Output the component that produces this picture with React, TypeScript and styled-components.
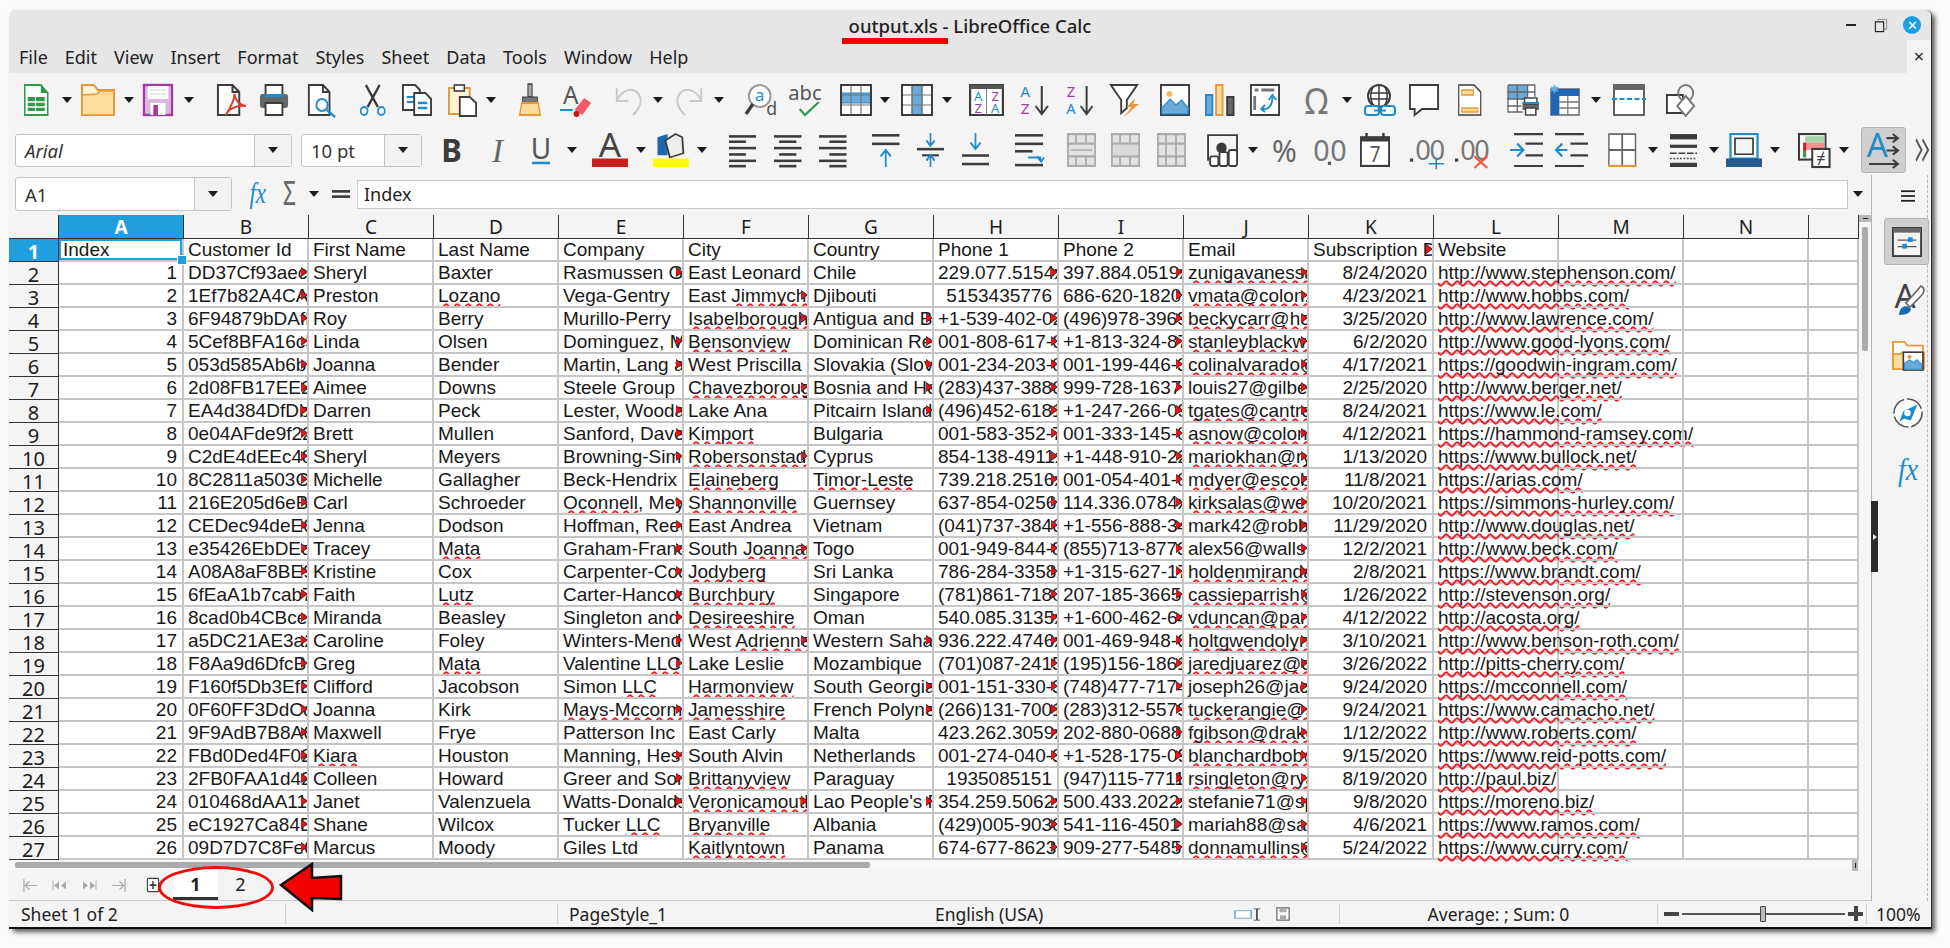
import React, { ReactNode } from 'react';
import styled, { createGlobalStyle } from 'styled-components';

const UI_FONT = '"Noto Sans", "Liberation Sans", sans-serif';
const CELL_FONT = '"Liberation Sans", Arial, sans-serif';
const ACCENT = '#1f9fdf';
const DARK = '#3c3c3c';
const BLUE = '#1e8bcd';
const ORANGE = '#e8963a';
const PURPLE = '#a33aa3';
const GREEN = '#2e9a4b';

const GlobalStyle = createGlobalStyle`
  html, body { margin: 0; padding: 0; background: #fbfbfb; }
  body { width: 1950px; height: 948px; overflow: hidden; font-family: ${UI_FONT}; }
`;

const Page = styled.div`
  padding: 10px 0 0 9px;
`;

const Window = styled.div`
  position: relative;
  width: 1922px;
  height: 919px;
  box-sizing: border-box;
  display: flex;
  flex-direction: column;
  background: #f4f4f4;
  border-radius: 6px 6px 0 0;
  border-bottom: 2px solid #111;
  box-shadow: 4px 3px 5px rgba(0, 0, 0, 0.65), 1px 0 0 #777;
`;

const TitleBar = styled.div`
  height: 30px;
  flex: none;
  display: flex;
  align-items: center;
  justify-content: center;
  position: relative;
  background: #e6e6e6;
  border-radius: 6px 6px 0 0;
  font-size: 18.5px;
  font-weight: 500;
  color: #222;
`;

const WinControls = styled.div`
  position: absolute;
  right: 10px;
  top: 6px;
  display: flex;
  align-items: center;
`;

const CloseDot = styled.div`
  width: 18px;
  height: 18px;
  border-radius: 50%;
  background: ${ACCENT};
  color: #fff;
  font-size: 13px;
  line-height: 18px;
  text-align: center;
  margin-left: 16px;
`;

const MenuBar = styled.div`
  height: 33px;
  flex: none;
  display: flex;
  align-items: center;
  justify-content: space-between;
  background: #e6e6e6;
  padding-left: 10px;
`;

const MenuList = styled.div`
  display: flex;
  gap: 17px;
  font-size: 18px;
  color: #222;
`;

const MenuClose = styled.div`
  width: 24px;
  height: 33px;
  background: #f4f4f4;
  text-align: center;
  font-size: 18px;
  line-height: 33px;
  color: #222;
`;

const ToolRowBox = styled.div<{ $h: number }>`
  height: ${(p) => p.$h}px;
  flex: none;
  display: flex;
  align-items: center;
`;

const Slot = styled.div<{ $w: number; $ml: number }>`
  width: ${(p) => p.$w}px;
  margin-left: ${(p) => p.$ml}px;
  flex: none;
  display: flex;
  justify-content: center;
`;

const Caret = styled.div`
  width: 0;
  height: 0;
  border-left: 5px solid transparent;
  border-right: 5px solid transparent;
  border-top: 6px solid #1c1c1c;
`;

const Combo = styled.div<{ $italic?: boolean; $split: number }>`
  flex: 1;
  height: 33px;
  box-sizing: border-box;
  display: grid;
  grid-template-columns: 1fr ${(p) => p.$split}px;
  align-items: center;
  background: #fff;
  border: 1px solid #c4c4c4;
  border-radius: 3px;
  font-size: 18.5px;
  color: #333;
  font-style: ${(p) => (p.$italic ? 'italic' : 'normal')};
`;

const ComboText = styled.span`
  padding-left: 9px;
`;

const ComboArrow = styled.div`
  height: 100%;
  display: flex;
  align-items: center;
  justify-content: center;
  background: #f2f2f2;
  border-left: 1px solid #c4c4c4;
`;

const ToggleBox = styled.div`
  width: 45px;
  height: 46px;
  box-sizing: border-box;
  display: flex;
  align-items: center;
  justify-content: center;
  background: #cfcfcf;
  border: 1px solid #b4b4b4;
  border-radius: 3px;
`;

const Work = styled.div`
  flex: 1;
  min-height: 0;
  display: flex;
`;

const MainColumn = styled.div`
  width: 1862px;
  flex: none;
  display: flex;
  flex-direction: column;
`;

const FormulaBar = styled.div`
  height: 42px;
  flex: none;
  display: flex;
  align-items: center;
`;

const NameBox = styled(Combo)`
  width: 217px;
  flex: none;
  margin-left: 6px;
  height: 34px;
`;

const FormulaInput = styled.div`
  width: 492px;
  flex: 1;
  height: 29px;
  box-sizing: border-box;
  margin-left: 7px;
  padding-left: 6px;
  background: #fff;
  border: 1px solid #c8c8c8;
  font-size: 18px;
  line-height: 26px;
  color: #222;
`;

const GridArea = styled.div`
  display: flex;
  flex: none;
`;

const Sheet = styled.div`
  width: 1850px;
  flex: none;
  display: grid;
  grid-template-columns: 50px repeat(14, 125px) 1fr;
  grid-template-rows: 24px repeat(27, 23px);
  background: #fff;
`;

const ColHead = styled.div<{ $active?: boolean }>`
  box-sizing: border-box;
  display: flex;
  align-items: center;
  justify-content: center;
  font-size: 19px;
  color: ${(p) => (p.$active ? '#fff' : '#1c1c1c')};
  font-weight: ${(p) => (p.$active ? 700 : 400)};
  background: ${(p) => (p.$active ? ACCENT : '#f4f4f4')};
  border-right: 1px solid #333;
  border-bottom: 1px solid #333;
`;

const Corner = styled.div`
  background: #f4f4f4;
  border-bottom: 1px solid #333;
  border-right: 1px solid #333;
  box-sizing: border-box;
`;

const RowHead = styled(ColHead)`
  font-size: 20px;
  padding-top: 3px;
`;

const Cell = styled.div<{ $right?: boolean; $clip?: boolean; $spill?: boolean; $selected?: boolean }>`
  position: relative;
  box-sizing: border-box;
  padding: 0 ${(p) => (p.$right ? 5 : 4)}px 0 4px;
  border-right: 2px solid #c6c6c6;
  border-bottom: 2px solid #c6c6c6;
  font-family: ${CELL_FONT};
  font-size: 19px;
  line-height: 21px;
  color: #181818;
  white-space: nowrap;
  text-align: ${(p) => (p.$right ? 'right' : 'left')};
  overflow: ${(p) => (p.$spill ? 'visible' : 'hidden')};
  ${(p) =>
    p.$selected &&
    `overflow: visible;
     z-index: 2;
     box-shadow: inset 0 0 0 2px ${ACCENT};`}
  ${(p) =>
    p.$clip &&
    `&::before {
       content: '';
       position: absolute;
       right: -1px;
       top: 5px;
       border-left: 7px solid #222;
       border-top: 5px solid transparent;
       border-bottom: 5px solid transparent;
     }
     &::after {
       content: '';
       position: absolute;
       right: 0;
       top: 6px;
       border-left: 6px solid #e8141c;
       border-top: 4px solid transparent;
       border-bottom: 4px solid transparent;
     }`}
`;

const FillHandle = styled.span`
  position: absolute;
  right: -5px;
  bottom: -5px;
  width: 8px;
  height: 8px;
  background: ${ACCENT};
  border: 1px solid #fff;
`;

const Wave = styled.span`
  text-decoration: underline wavy #e8202a 1.5px;
  text-underline-offset: 1px;
  text-decoration-skip-ink: none;
`;

const VScroll = styled.div`
  width: 12px;
  flex: none;
  display: flex;
  flex-direction: column;
  align-items: center;
  background: #f6f6f6;
`;

const VButton = styled.div`
  width: 12px;
  height: 7px;
  background: #b8b8b8;
  display: flex;
  align-items: center;
  justify-content: center;
  &::after {
    content: '';
    width: 5px;
    height: 1px;
    background: #222;
  }
`;

const VThumb = styled.div`
  width: 6px;
  height: 124px;
  margin-top: 5px;
  border-radius: 2px;
  background: #ababab;
`;

const HScroll = styled.div`
  height: 10px;
  flex: none;
  display: flex;
  align-items: center;
  justify-content: space-between;
  padding: 0 13px 0 6px;
  background: #f7f7f7;
`;

const HThumb = styled.div`
  width: 855px;
  height: 6px;
  border-radius: 2px;
  background: #ababab;
`;

const HButton = styled.div`
  width: 6px;
  height: 11px;
  background: #b8b8b8;
  display: flex;
  align-items: center;
  justify-content: center;
  &::after {
    content: '';
    width: 1px;
    height: 5px;
    background: #222;
  }
`;

const TabRow = styled.div`
  height: 31px;
  flex: none;
  box-sizing: border-box;
  display: flex;
  align-items: center;
  border-bottom: 1px solid #c8c8c8;
`;

const SheetTab = styled.div<{ $active?: boolean }>`
  width: 45px;
  height: 30px;
  box-sizing: border-box;
  display: flex;
  align-items: center;
  justify-content: center;
  font-size: 18px;
  color: #222;
  font-weight: ${(p) => (p.$active ? 700 : 400)};
  background: ${(p) => (p.$active ? '#fff' : 'transparent')};
  border-bottom: ${(p) => (p.$active ? '3px solid #333' : '3px solid transparent')};
`;

const Sidebar = styled.div`
  flex: 1;
  display: flex;
  margin-top: 2px;
  border-left: 1px solid #b4b4b4;
`;

const SideColumn = styled.div`
  width: 55px;
  flex: none;
  display: flex;
  flex-direction: column;
  border-right: 1px dashed #b8b8b8;
`;

const SideIcon = styled.div<{ $top: number; $left: number }>`
  margin: ${(p) => p.$top}px 0 0 ${(p) => p.$left}px;
`;

const SideSelected = styled.div`
  width: 45px;
  height: 47px;
  box-sizing: border-box;
  margin: 15px 0 0 12px;
  display: flex;
  align-items: center;
  justify-content: center;
  background: #cfcfcf;
  border: 1px solid #b4b4b4;
  border-radius: 3px;
  position: relative;
`;

const CollapseHandle = styled.div`
  position: absolute;
  left: 1862px;
  top: 491px;
  width: 7px;
  height: 71px;
  background: #2c2c2c;
  display: flex;
  align-items: center;
  justify-content: center;
  &::after {
    content: '';
    border-left: 4px solid #eee;
    border-top: 3px solid transparent;
    border-bottom: 3px solid transparent;
  }
`;

const StatusBar = styled.div`
  height: 26px;
  flex: none;
  display: flex;
  align-items: center;
  font-size: 17.5px;
  color: #222;
`;

const StatusCell = styled.div<{ $w: number; $pad?: number; $center?: boolean; $line?: boolean }>`
  width: ${(p) => p.$w}px;
  height: 20px;
  flex: none;
  box-sizing: border-box;
  display: flex;
  align-items: center;
  padding-left: ${(p) => p.$pad ?? 0}px;
  justify-content: ${(p) => (p.$center ? 'center' : 'flex-start')};
  border-right: ${(p) => (p.$line ? '1px solid #d0d0d0' : 'none')};
  white-space: nowrap;
`;

const ZoomTrack = styled.div`
  position: relative;
  width: 163px;
  height: 2px;
  margin: 0 3px;
  background: #555;
`;

const ZoomThumb = styled.div`
  position: absolute;
  left: 78px;
  top: -7px;
  width: 6px;
  height: 16px;
  box-sizing: border-box;
  background: #bbb;
  border: 1px solid #444;
  border-radius: 1px;
`;

const ZoomSign = styled.div<{ $plus?: boolean }>`
  position: relative;
  width: 15px;
  height: 4px;
  background: #444;
  &::after {
    content: '';
    display: ${(p) => (p.$plus ? 'block' : 'none')};
    position: absolute;
    left: 5.5px;
    top: -6px;
    width: 4px;
    height: 15px;
    background: #444;
  }
`;

const TitleMark = styled.div`
  position: absolute;
  left: 833px;
  top: 28px;
  width: 106px;
  height: 6px;
  background: #f40000;
`;

const TabCircle = styled.div`
  position: absolute;
  left: 149px;
  top: 856px;
  width: 116px;
  height: 43px;
  box-sizing: border-box;
  border: 3px solid #ee0d0d;
  border-radius: 50%;
`;

const ArrowMark = styled.svg`
  position: absolute;
  left: 270px;
  top: 852px;
  width: 64px;
  height: 50px;
`;

const Glyph = styled.svg.attrs({ viewBox: '0 0 32 32', preserveAspectRatio: 'none' })<{ $w: number; $h: number }>`
  display: block;
  flex: none;
  width: ${(p) => p.$w}px;
  height: ${(p) => p.$h}px;
  overflow: visible;
`;

// little helpers for the toolbar drawings
const T = (p: { x: number; y: number; s: number; c?: string; b?: boolean; i?: boolean; serif?: boolean; a?: 'middle' | 'start'; t: string }) => (
  <text
    x={p.x}
    y={p.y}
    fontSize={p.s}
    fill={p.c ?? DARK}
    fontWeight={p.b ? 700 : 400}
    fontStyle={p.i ? 'italic' : 'normal'}
    fontFamily={p.serif ? '"Liberation Serif", serif' : '"Noto Sans", sans-serif'}
    textAnchor={p.a ?? 'middle'}
  >
    {p.t}
  </text>
);

const Lines = ({ d, c = DARK, w = 2 }: { d: string; c?: string; w?: number }) => <path d={d} stroke={c} strokeWidth={w} fill="none" />;

const Table = ({ band }: { band?: ReactNode }) => (
  <>
    <rect x="1" y="1" width="30" height="30" fill="#fff" />
    {band}
    <Lines d="M1 11h30M1 21h30M11 1v30M21 1v30" c="#777" w={1.2} />
    <rect x="1" y="1" width="30" height="30" fill="none" stroke={DARK} strokeWidth="2" />
  </>
);

const Bricks = () => (
  <>
    <rect x="1" y="1" width="30" height="30" fill="#e2e2e2" stroke="#aaa" strokeWidth="2" />
    <Lines d="M1 10h30M1 22h30M10 1v9M21 1v9M10 22v9M21 22v9" c="#aaa" />
  </>
);

const alignLines = (kind: 'l' | 'c' | 'r') => {
  const row = (y: number, long: boolean) => {
    const w = long ? 32 : 20;
    const x = kind === 'l' ? 0 : kind === 'c' ? (32 - w) / 2 : 32 - w;
    return <rect key={y} x={x} y={y} width={w} height={2.4} fill={DARK} />;
  };
  return (
    <>
      {row(2, true)}
      {row(7, false)}
      {row(13, true)}
      {row(19, false)}
      {row(25, true)}
      {row(30, false)}
    </>
  );
};

const icons: Record<string, ReactNode> = {
  newSheet: (
    <>
      <path d="M1 1h21l9 8v22H1z" fill="#fff" stroke={GREEN} strokeWidth="2" />
      <path d="M22 1l9 8h-9z" fill={GREEN} />
      <rect x="5" y="13" width="22" height="14" fill={GREEN} />
      <Lines d="M5 18h22M5 23h22M15 13v14" c="#fff" w={1.5} />
    </>
  ),
  folder: (
    <>
      <path d="M1 31V1h11l4 5h15v25z" fill="#fff3d6" stroke={ORANGE} strokeWidth="2" />
      <path d="M1 31V11l14-1 3-3h13v24z" fill="#ffdc9a" stroke={ORANGE} strokeWidth="1.5" />
    </>
  ),
  save: (
    <>
      <rect x="1" y="1" width="30" height="30" fill="#d9b6de" stroke={PURPLE} strokeWidth="2.4" />
      <rect x="5" y="2" width="22" height="13" fill="#fff" />
      <Lines d="M7 6h18M7 10h18" c="#ccc" w={1} />
      <rect x="8" y="19" width="16" height="12" fill="#fff" />
      <rect x="11" y="21" width="5" height="10" fill={PURPLE} />
    </>
  ),
  pdf: (
    <>
      <path d="M2 1h15l7 7v23H2zM17 1v7h7" fill="#fff" stroke={DARK} strokeWidth="2" />
      <path d="M19 10c0 8-5 15-9 21 3-6 11-10 21-9-6-1-11-5-12-12z" fill="none" stroke="#e03a32" strokeWidth="2" />
    </>
  ),
  print: (
    <>
      <rect x="7" y="1" width="18" height="12" fill="#fff" stroke={DARK} strokeWidth="2" />
      <rect x="1" y="10" width="30" height="14" rx="3" fill="#666" />
      <rect x="6" y="10" width="20" height="3" fill={BLUE} />
      <rect x="7" y="19" width="18" height="12" fill="#fff" stroke={DARK} strokeWidth="2" />
    </>
  ),
  preview: (
    <>
      <path d="M2 1h15l7 7v23H2zM17 1v7h7" fill="#fff" stroke={DARK} strokeWidth="2" />
      <circle cx="16" cy="21" r="6" fill="#fff" stroke={BLUE} strokeWidth="2" />
      <Lines d="M21 26l9 7" c={BLUE} w={2.4} />
    </>
  ),
  cut: (
    <>
      <Lines d="M8 1l14 22M24 1L10 23" w={2.6} />
      <circle cx="6" cy="27" r="4" fill="#fff" stroke={BLUE} strokeWidth="2" />
      <circle cx="26" cy="27" r="4" fill="#fff" stroke={BLUE} strokeWidth="2" />
    </>
  ),
  copy: (
    <>
      <path d="M1 1h13l5 5v20H1z" fill="#fff" stroke={DARK} strokeWidth="2" />
      <Lines d="M5 13h9M5 18h9" c={BLUE} />
      <path d="M13 9h12l6 6v16H13z" fill="#fff" stroke={DARK} strokeWidth="2" />
      <Lines d="M17 19h10M17 24h10" c={BLUE} w={2.4} />
    </>
  ),
  paste: (
    <>
      <rect x="1" y="4" width="23" height="26" fill="#fff3d6" stroke={ORANGE} strokeWidth="2" />
      <rect x="7" y="1" width="11" height="6" fill="#fff" stroke={DARK} strokeWidth="1.6" />
      <path d="M13 13h11l7 6v13H13z" fill="#fff" stroke={DARK} strokeWidth="2" />
    </>
  ),
  clone: (
    <>
      <rect x="13" y="0" width="6" height="13" fill="#aaa" stroke={DARK} strokeWidth="1.5" />
      <rect x="5" y="13" width="22" height="6" fill="#777" stroke={DARK} strokeWidth="1" />
      <path d="M4 19h24l3 12H1z" fill="#ffdc9a" stroke={ORANGE} strokeWidth="2" />
    </>
  ),
  clear: (
    <>
      <T x={11} y={20} s={25} t="A" c="#555" />
      <Lines d="M0 26h13" c={BLUE} />
      <path d="M15 26l10-12 7 5-9 12z" fill="#f25a66" />
      <circle cx="17" cy="30" r="3" fill="#c81414" />
    </>
  ),
  undo: (
    <>
      <path d="M4 15c6-10 17-12 23-5 5 6 2 14-6 21" fill="none" stroke="#c8c8c8" strokeWidth="2" />
      <Lines d="M3 4v13h13" c="#c8c8c8" />
    </>
  ),
  redo: (
    <>
      <path d="M28 15C22 5 11 3 5 10c-5 6-2 14 6 21" fill="none" stroke="#c8c8c8" strokeWidth="2" />
      <Lines d="M29 4v13H16" c="#c8c8c8" />
    </>
  ),
  find: (
    <>
      <circle cx="15" cy="12" r="11" fill="#fff" stroke="#999" strokeWidth="2" />
      <Lines d="M8 20L1 30" w={3.4} />
      <T x={15} y={17} s={17} t="a" c={BLUE} />
      <T x={27} y={31} s={18} t="d" c="#555" />
    </>
  ),
  spell: (
    <>
      <T x={16} y={16} s={19} t="abc" c="#555" />
      <Lines d="M11 25l5 6 13-13" c={GREEN} />
    </>
  ),
  rows: <Table band={<rect x="1" y="9" width="30" height="10" fill="#6aa9d8" stroke={BLUE} />} />,
  columns: <Table band={<rect x="11" y="1" width="10" height="30" fill="#6aa9d8" stroke={BLUE} />} />,
  sort: (
    <>
      <rect x="1" y="1" width="30" height="30" fill="#fff" stroke={DARK} strokeWidth="2" />
      <rect x="1" y="1" width="30" height="4" fill="#555" />
      <Lines d="M16 5v26" c="#888" w={1} />
      <T x={8.5} y={17} s={12} t="A" c={BLUE} />
      <T x={8.5} y={29} s={12} t="Z" c={PURPLE} />
      <T x={24} y={17} s={12} t="Z" c={PURPLE} />
      <T x={24} y={29} s={12} t="A" c={BLUE} />
    </>
  ),
  sortAz: (
    <>
      <T x={8} y={13} s={15} t="A" c={BLUE} />
      <T x={8} y={30} s={15} t="Z" c={PURPLE} />
      <Lines d="M24 2v27M18 22l6 8 6-8" />
    </>
  ),
  sortZa: (
    <>
      <T x={8} y={13} s={15} t="Z" c={PURPLE} />
      <T x={8} y={30} s={15} t="A" c={BLUE} />
      <Lines d="M24 2v27M18 22l6 8 6-8" />
    </>
  ),
  filter: (
    <>
      <path d="M2 1h28L19 16v8l-6 5V16z" fill="#fff" stroke={DARK} strokeWidth="2" />
      <path d="M28 14l-9 9h5l-8 10 16-13h-6z" fill={ORANGE} />
    </>
  ),
  image: (
    <>
      <rect x="1" y="1" width="30" height="30" fill="#fff" stroke={DARK} strokeWidth="2" />
      <circle cx="10" cy="10" r="3" fill="#f4b860" />
      <path d="M2 30V24l9-9 6 6 6-5 7 8v6z" fill="#6aa9d8" stroke={BLUE} strokeWidth="1.2" />
    </>
  ),
  chart: (
    <>
      <rect x="1" y="11" width="7" height="20" fill="#6aa9d8" stroke={BLUE} strokeWidth="2" />
      <rect x="12" y="1" width="7" height="30" fill="#ffdc9a" stroke={ORANGE} strokeWidth="2" />
      <rect x="24" y="13" width="7" height="18" fill="#666" stroke={DARK} strokeWidth="2" />
    </>
  ),
  pivot: (
    <>
      <rect x="1" y="1" width="30" height="30" fill="#fff" stroke={DARK} strokeWidth="2" />
      <Lines d="M5 6h4M12 6h14M5 12v14" c="#777" w={3} />
      <path d="M13 25c8 1 11-5 11-12" fill="none" stroke={BLUE} strokeWidth="2" />
      <Lines d="M20 16l4-5 4 5M16 21l-4 4 4 3" c={BLUE} />
    </>
  ),
  omega: <T x={16} y={30} s={36} t="Ω" c="#777" />,
  link: (
    <>
      <circle cx="15" cy="12" r="11" fill="#fff" stroke={DARK} strokeWidth="2" />
      <Lines d="M4 9h22M4 15h22M15 1v22M9 3c-3 6-3 12 0 18M21 3c3 6 3 12 0 18" w={1.5} />
      <rect x="1" y="22" width="14" height="9" rx="3" fill="#fff" stroke={BLUE} strokeWidth="2" />
      <rect x="17" y="22" width="14" height="9" rx="3" fill="#fff" stroke={BLUE} strokeWidth="2" />
      <Lines d="M10 26.5h12" c={BLUE} />
    </>
  ),
  comment: <path d="M1 1h30v24H14l-8 6v-6H1z" fill="#fff" stroke={DARK} strokeWidth="2" />,
  header: (
    <>
      <path d="M1 1h21l9 7v23H1z" fill="#fff" stroke={DARK} strokeWidth="1.6" />
      <rect x="5" y="6" width="16" height="5" fill="#ffdc9a" stroke={ORANGE} strokeWidth="1.5" />
      <rect x="5" y="24" width="22" height="4" fill="#ffdc9a" stroke={ORANGE} strokeWidth="1.5" />
    </>
  ),
  printArea: (
    <>
      <rect x="0" y="0" width="28" height="28" fill="#fff" />
      <rect x="1" y="1" width="19" height="14" fill="#6aa9d8" />
      <Lines d="M0 8h27M0 15h27M0 22h14M10 1v27M20 1v12M1 1h26v12M1 1v27h14" c="#666" w={1.3} />
      <rect x="15" y="18" width="16" height="8" rx="1" fill="#666" />
      <rect x="17" y="14" width="12" height="6" fill="#fff" stroke={DARK} strokeWidth="1.4" />
      <rect x="15" y="18" width="16" height="2" fill={BLUE} />
      <rect x="18" y="24" width="10" height="7" fill="#fff" stroke={DARK} strokeWidth="1.4" />
    </>
  ),
  freeze: (
    <>
      <rect x="1" y="5" width="30" height="26" fill="#fff" stroke="#666" strokeWidth="1.5" />
      <rect x="1" y="5" width="30" height="7" fill="#1f66b5" />
      <rect x="1" y="5" width="9" height="26" fill="#1f66b5" />
      <Lines d="M10 18h21M10 24h21M19 12v19" c="#777" w={1.3} />
      <T x={5} y={9} s={11} t="✱" c="#5fb0ea" />
    </>
  ),
  split: (
    <>
      <rect x="1" y="1" width="30" height="30" fill="#fff" stroke={DARK} strokeWidth="1.6" />
      <rect x="1" y="1" width="30" height="5" fill="#666" />
      <path d="M-1 15h34" stroke={BLUE} strokeWidth="2.2" strokeDasharray="5 2.5" />
    </>
  ),
  shapes: (
    <>
      <rect x="1" y="11" width="17" height="18" fill="#fff" stroke={DARK} strokeWidth="2" />
      <circle cx="21" cy="9" r="8" fill="none" stroke="#777" strokeWidth="2" />
      <path d="M21 12l9 10-9 10-9-10z" fill="#fff" stroke="#777" strokeWidth="2" />
    </>
  ),
  bold: <T x={16} y={27} s={30} t="B" b c={DARK} />,
  italic: <T x={16} y={27} s={32} t="I" i serif c="#666" />,
  underline: (
    <>
      <T x={16} y={24} s={28} t="U" c="#555" />
      <rect x="7" y="27" width="18" height="2.4" fill={BLUE} />
    </>
  ),
  fontColor: (
    <>
      <T x={16} y={23} s={31} t="A" c="#444" />
      <rect x="0" y="24" width="32" height="8" fill="#c81e1e" />
    </>
  ),
  bgColor: (
    <>
      <path d="M4 4l9-3v20H4z" fill="#1f66b5" />
      <path d="M11 7l9-6 6 3 1 15-12 4z" fill="#eee" stroke={DARK} strokeWidth="1.6" />
      <rect x="0" y="24" width="32" height="8" fill="#ffff00" />
    </>
  ),
  alignL: alignLines('l'),
  alignC: alignLines('c'),
  alignR: alignLines('r'),
  vTop: (
    <>
      <rect x="0" y="1" width="32" height="2.4" fill={DARK} />
      <rect x="0" y="9" width="32" height="2.4" fill={DARK} />
      <Lines d="M16 32V17M10 22l6-6 6 6" c={BLUE} />
    </>
  ),
  vCenter: (
    <>
      <rect x="0" y="14" width="32" height="2.4" fill={DARK} />
      <rect x="6" y="20" width="20" height="2" fill={DARK} />
      <Lines d="M16 0v11M11 7l5 5 5-5M16 32V22M11 26l5-5 5 5" c={BLUE} />
    </>
  ),
  vBottom: (
    <>
      <Lines d="M16 0v14M10 9l6 6 6-6" c={BLUE} />
      <rect x="0" y="20" width="32" height="2.4" fill={DARK} />
      <rect x="0" y="28" width="32" height="2.4" fill={DARK} />
    </>
  ),
  wrap: (
    <>
      <rect x="0" y="1" width="32" height="2.4" fill={DARK} />
      <rect x="0" y="9" width="32" height="2.4" fill={DARK} />
      <rect x="0" y="16" width="20" height="2.4" fill={DARK} />
      <rect x="0" y="29" width="32" height="2.4" fill={DARK} />
      <Lines d="M15 23h14v3M25 22l5 5 3-4" c={BLUE} />
    </>
  ),
  merge: (
    <>
      <Bricks />
      <Lines d="M4 16h24" c="#bbb" />
    </>
  ),
  merge2: (
    <>
      <Bricks />
      <rect x="3" y="11" width="26" height="10" fill="#d8d8d8" />
    </>
  ),
  merge3: (
    <>
      <Bricks />
      <Lines d="M10 10v12M21 10v12" c="#aaa" />
    </>
  ),
  currency: (
    <>
      <Lines d="M2 26V2h28v24" w={1.8} />
      <circle cx="15" cy="14" r="5" fill={DARK} />
      <rect x="4" y="22" width="8" height="9" rx="2" fill="#fff" stroke={DARK} strokeWidth="1.8" />
      <rect x="13" y="18" width="8" height="13" rx="2" fill="#fff" stroke={DARK} strokeWidth="1.8" />
      <rect x="22" y="16" width="8" height="15" rx="2" fill="#fff" stroke={DARK} strokeWidth="1.8" />
    </>
  ),
  percent: <T x={16} y={27} s={29} t="%" c="#666" />,
  number: (
    <>
      <T x={8} y={26} s={27} t="0" c="#777" />
      <T x={24} y={26} s={27} t="0" c="#777" />
      <rect x="14" y="27" width="3" height="3" fill="#555" />
    </>
  ),
  date: (
    <>
      <rect x="1" y="4" width="30" height="27" fill="#fff" stroke={DARK} strokeWidth="2" />
      <rect x="1" y="4" width="30" height="4" fill={DARK} />
      <Lines d="M7 0v6M25 0v6" w={2.6} />
      <T x={16} y={27} s={20} t="7" c="#555" />
    </>
  ),
  addDec: (
    <>
      <rect x="0" y="24" width="3" height="3" fill="#444" />
      <T x={12} y={25} s={25} t="0" c="#777" />
      <T x={25} y={25} s={25} t="0" c="#777" />
      <Lines d="M17 29h14M24 23v11" c={BLUE} w={1.4} />
    </>
  ),
  delDec: (
    <>
      <rect x="0" y="24" width="3" height="3" fill="#444" />
      <T x={12} y={25} s={25} t="0" c="#777" />
      <T x={25} y={25} s={25} t="0" c="#777" />
      <Lines d="M18 22l12 11M30 22L18 33" c="#f05a3a" />
    </>
  ),
  indentInc: (
    <>
      <Lines d="M4 1h28M15 10h17M15 21h17M4 31h28" w={2} />
      <Lines d="M0 16h12M7 10l6 6-6 6" c={BLUE} />
    </>
  ),
  indentDec: (
    <>
      <Lines d="M0 1h28M15 10h17M15 21h17M0 31h28" w={2} />
      <Lines d="M12 16H1M7 10l-6 6 6 6" c={BLUE} />
    </>
  ),
  borders: (
    <>
      <rect x="1" y="1" width="30" height="30" fill="#fff" stroke="#666" strokeWidth="1.6" />
      <Lines d="M16 1v30M1 16h30" c="#666" />
      <Lines d="M0 31h32" c={ORANGE} />
    </>
  ),
  borderStyle: (
    <>
      <rect x="0" y="1" width="32" height="5" fill={DARK} />
      <rect x="0" y="11" width="32" height="3" fill={DARK} />
      <path d="M0 19h32" stroke={DARK} strokeWidth="1.4" strokeDasharray="8 2" />
      <path d="M0 24h32" stroke={DARK} strokeWidth="1.2" strokeDasharray="2 2" />
      <rect x="0" y="28" width="32" height="4" fill={DARK} />
    </>
  ),
  borderColor: (
    <>
      <rect x="4" y="1" width="24" height="23" fill="#fff" stroke={BLUE} strokeWidth="2" />
      <rect x="8" y="5" width="16" height="15" fill="#f4f4f4" stroke={DARK} strokeWidth="1.5" />
      <rect x="0" y="24" width="32" height="8" fill="#27598f" />
    </>
  ),
  cond: (
    <>
      <rect x="1" y="1" width="26" height="24" fill="#fff" stroke={DARK} strokeWidth="2" />
      <rect x="7" y="3" width="19" height="6" fill="#a8d5a8" />
      <rect x="7" y="9" width="19" height="7" fill="#f59090" />
      <rect x="5" y="9" width="3" height="8" fill="#d02020" />
      <rect x="5" y="17" width="3" height="6" fill={GREEN} />
      <rect x="14" y="15" width="17" height="17" fill="#fff" stroke={DARK} strokeWidth="2" />
      <T x={22.5} y={29} s={16} t="≠" />
    </>
  ),
  dir: (
    <>
      <T x={10} y={22} s={32} t="A" c={BLUE} />
      <Lines d="M19 4h11M25 0l5 4-5 4M19 16h11M25 12l5 4-5 4M2 29h28M25 25l5 4-5 4" />
    </>
  ),
  more: <Lines d="M2 6l12 10L2 26M16 6l12 10-12 10" c="#555" w={3} />,
  fx: <T x={15} y={26} s={32} t="fx" i serif c={BLUE} />,
  sigma: <T x={16} y={29} s={38} t="Σ" c="#666" />,
  equals: (
    <>
      <rect x="0" y="7" width="32" height="6" fill={DARK} />
      <rect x="0" y="19" width="32" height="6" fill={DARK} />
    </>
  ),
  menu: (
    <>
      <rect x="0" y="3" width="32" height="4" fill="#222" />
      <rect x="0" y="14" width="32" height="4" fill="#222" />
      <rect x="0" y="25" width="32" height="4" fill="#222" />
    </>
  ),
  props: (
    <>
      <rect x="1" y="1" width="30" height="30" fill="#f4f4f4" stroke={DARK} strokeWidth="2" />
      <rect x="1" y="1" width="30" height="5" fill="#666" />
      <Lines d="M6 14h20M6 21h20" c="#555" w={1.4} />
      <rect x="17" y="11" width="5" height="5" fill={BLUE} />
      <rect x="11" y="18" width="5" height="5" fill={BLUE} />
    </>
  ),
  styles: (
    <>
      <T x={12} y={24} s={33} t="A" c="#444" />
      <path d="M28 2c4 2 4 6 0 10L17 23l-4-4z" fill="#fff" stroke="#666" strokeWidth="1.6" />
      <path d="M6 31c0-6 4-9 8-9l4 3c0 3-4 6-12 6z" fill="#1f66b5" />
    </>
  ),
  gallery: (
    <>
      <path d="M1 30V1h11l3 4h15v6" fill="#fff" stroke={ORANGE} strokeWidth="1.8" />
      <path d="M1 30V14h7l2-2h21v18z" fill="#ffdc9a" stroke={ORANGE} strokeWidth="1.8" />
      <rect x="11" y="12" width="19" height="19" fill="#fff" stroke={DARK} strokeWidth="1.6" />
      <circle cx="17" cy="17" r="2" fill={ORANGE} />
      <path d="M12 30v-6l5-4 4 3 3-3 5 5v5z" fill="#6aa9d8" stroke={BLUE} />
    </>
  ),
  nav: (
    <>
      <circle cx="16" cy="16" r="15" fill="#fff" stroke="#555" strokeWidth="1.6" strokeDasharray="20 3" />
      <path d="M26 7L19 24 12 22 7 25 11 14z" fill={BLUE} />
      <circle cx="15.5" cy="16" r="3.5" fill="#fff" />
    </>
  ),
  first: <Lines d="M2 2v28M6 16h24M14 7l-9 9 9 9" c="#aaa" w={2.6} />,
  prev: (
    <>
      <path d="M14 6L4 16l10 10zM28 6L18 16l10 10z" fill="#aaa" />
      <Lines d="M2 4v24" c="#aaa" />
    </>
  ),
  next: (
    <>
      <path d="M4 6l10 10L4 26zM18 6l10 10-10 10z" fill="#aaa" />
      <Lines d="M30 4v24" c="#aaa" />
    </>
  ),
  last: <Lines d="M30 2v28M26 16H2M18 7l9 9-9 9" c="#aaa" w={2.6} />,
  addSheet: (
    <>
      <rect x="1" y="1" width="30" height="30" rx="3" fill="#fff" stroke={DARK} strokeWidth="3" />
      <Lines d="M16 7v18M7 16h18" w={4} />
    </>
  ),
  insertMode: (
    <>
      <rect x="0" y="8" width="20" height="16" fill="#fff" stroke="#6aa9d8" strokeWidth="2" />
      <Lines d="M27 4v24M23 4h8M23 28h8" />
    </>
  ),
  docState: (
    <>
      <rect x="2" y="2" width="28" height="28" fill="#fff" stroke="#555" strokeWidth="2.5" />
      <rect x="8" y="2" width="16" height="10" fill="#aaa" />
      <rect x="9" y="19" width="14" height="11" fill="#aaa" />
    </>
  ),
};

type Tool = [string, number, number];

const dd = (center: number): Tool => ['dd', center - 5, center + 5];

const topTools: Tool[] = [
  ['newSheet', 24, 48.5], dd(67), ['folder', 81, 115], dd(128.5), ['save', 143, 173], dd(189),
  ['pdf', 216, 247], ['print', 259, 289], ['preview', 307, 337], ['cut', 358.5, 386], ['copy', 402, 432],
  ['paste', 448, 477], dd(491), ['clone', 519, 541], ['clear', 560, 591], ['undo', 613.5, 642.5], dd(658),
  ['redo', 675, 704], dd(719), ['find', 744.5, 776], ['spell', 788, 822], ['rows', 840, 872], dd(885),
  ['columns', 901, 933], dd(947), ['sort', 969, 1004], ['sortAz', 1017, 1050], ['sortZa', 1062.5, 1094],
  ['filter', 1109, 1139], ['image', 1160, 1190], ['chart', 1205, 1234.5], ['pivot', 1250, 1280],
  ['omega', 1302, 1331], dd(1347), ['link', 1364, 1396], ['comment', 1409, 1439], ['header', 1457.5, 1481],
  ['printArea', 1507, 1540], ['freeze', 1550, 1580], dd(1595.5), ['split', 1613, 1645], ['shapes', 1666, 1696],
];

const formatTools: Tool[] = [
  ['font', 15, 292], ['size', 301, 422], ['bold', 435, 468], ['italic', 481, 514], ['underline', 525, 557], dd(572),
  ['fontColor', 592, 628], dd(640.5), ['bgColor', 653, 689], dd(702), ['alignL', 729, 756], ['alignC', 773.5, 801],
  ['alignR', 819, 846.5], ['vTop', 872, 899.5], ['vCenter', 917, 944], ['vBottom', 962, 989], ['wrap', 1015, 1043],
  ['merge', 1066.5, 1095.5], ['merge2', 1111, 1140], ['merge3', 1156.5, 1185.5], ['currency', 1205.5, 1238.6], dd(1253),
  ['percent', 1268, 1301], ['number', 1313, 1347], ['date', 1360, 1390], ['addDec', 1410, 1445], ['delDec', 1455.5, 1490],
  ['indentInc', 1510, 1543], ['indentDec', 1555, 1588], ['borders', 1607.6, 1636], dd(1653), ['borderStyle', 1670, 1697], dd(1714),
  ['borderColor', 1726, 1762], dd(1775), ['cond', 1798, 1830.6], dd(1844), ['dirToggle', 1861, 1906], ['more', 1915, 1930],
];

const comboBody = (text: string, split: number, italic?: boolean) => (
  <Combo $split={split} $italic={italic}>
    <ComboText>{text}</ComboText>
    <ComboArrow>
      <Caret />
    </ComboArrow>
  </Combo>
);

function ToolBody({ name, w, h }: { name: string; w: number; h: number }) {
  if (name === 'dd') return <Caret />;
  if (name === 'font') return comboBody('Arial', 37, true);
  if (name === 'size') return comboBody('10 pt', 37);
  if (name === 'dirToggle')
    return (
      <ToggleBox>
        <Glyph $w={33} $h={33}>{icons.dir}</Glyph>
      </ToggleBox>
    );
  return <Glyph $w={w} $h={h}>{icons[name]}</Glyph>;
}

function ToolRow({ tools, height, iconHeight }: { tools: Tool[]; height: number; iconHeight: number }) {
  return (
    <ToolRowBox $h={height}>
      {tools.map(([name, left, right], i) => {
        const prevEnd = i === 0 ? 9 : tools[i - 1][2];
        return (
          <Slot key={i} $w={right - left} $ml={left - prevEnd}>
            <ToolBody name={name} w={right - left} h={iconHeight} />
          </Slot>
        );
      })}
    </ToolRowBox>
  );
}

const MENU = ['File', 'Edit', 'View', 'Insert', 'Format', 'Styles', 'Sheet', 'Data', 'Tools', 'Window', 'Help'];
const COLUMNS = 'ABCDEFGHIJKLMN'.split('');
const HEADERS = 'Index|Customer Id|First Name|Last Name|Company|City|Country|Phone 1|Phone 2|Email|Subscription Date>|Website'.split('|');

// ~text~ is a word the spell check marks, a trailing > means the cell is cut off
const DATA = `DD37Cf93aecA6Dc>|Sheryl|Baxter|Rasmussen Group>|East Leonard|Chile|229.077.5154x>|397.884.0519x718>|~zunigavanessa@smith.info~>|8/24/2020|~http://www.stephenson.com/~
1Ef7b82A4CAAD10>|Preston|~Lozano~|Vega-Gentry|East ~Jimmychester~>|Djibouti|5153435776|686-620-1820x944>|~vmata@colon.com~>|4/23/2021|~http://www.hobbs.com/~
6F94879bDAfE5a6>|Roy|Berry|Murillo-Perry|~Isabelborough~>|Antigua and Barbuda>|+1-539-402-0259>|(496)978-3969x58947>|~beckycarr@hogan.com~>|3/25/2020|~http://www.lawrence.com/~
5Cef8BFA16c5e3c>|Linda|Olsen|Dominguez, Mcmillan and Donovan>|~Bensonview~|Dominican Republic>|001-808-617-6467x12895>|+1-813-324-8756>|~stanleyblackwell@benson.org~>|6/2/2020|~http://www.good-lyons.com/~
053d585Ab6b3159>|Joanna|Bender|Martin, Lang and Andrade>|West Priscilla|Slovakia (Slovak Republic)>|001-234-203-0635x76146>|001-199-446-3860x3486>|~colinalvarado@miles.net~>|4/17/2021|~https://goodwin-ingram.com/~
2d08FB17EE273F4>|Aimee|Downs|Steele Group|~Chavezborough~>|Bosnia and Herzegovina>|(283)437-3886x88321>|999-728-1637>|louis27@gilbert.com>|2/25/2020|~http://www.berger.net/~
EA4d384DfDbBf77>|Darren|Peck|Lester, Woodard and Mitchell>|Lake Ana|Pitcairn Islands>|(496)452-6181x3291>|+1-247-266-0963x4995>|~tgates@cantrell.com~>|8/24/2021|~https://www.le.com/~
0e04AFde9f225dE>|Brett|Mullen|Sanford, Davenport and Giles>|~Kimport~|Bulgaria|001-583-352-7197x297>|001-333-145-0369>|~asnow@colon.com~>|4/12/2021|~https://hammond-ramsey.com/~
C2dE4dEEc489ae0>|Sheryl|Meyers|Browning-Simon>|~Robersonstad~>|Cyprus|854-138-4911x5772>|+1-448-910-2276x729>|~mariokhan@ryan-pope.org~>|1/13/2020|~https://www.bullock.net/~
8C2811a503C7c5a>|Michelle|Gallagher|Beck-Hendrix|~Elaineberg~|~Timor-Leste~|739.218.2516x459>|001-054-401-0347x617>|~mdyer@escobar.net~>|11/8/2021|~https://arias.com/~
216E205d6eBb815>|Carl|Schroeder|~Oconnell~, Meyer and Sons>|~Shannonville~|Guernsey|637-854-0256x825>|114.336.0784x788>|~kirksalas@webb.com~>|10/20/2021|~https://simmons-hurley.com/~
CEDec94deE6d69B>|Jenna|Dodson|Hoffman, Reed and Sons>|East Andrea|Vietnam|(041)737-3846>|+1-556-888-3485x42608>|mark42@robbins.com>|11/29/2020|~http://www.douglas.net/~
e35426EbDEceaFF>|Tracey|~Mata~|Graham-Francis>|South ~Joannamouth~>|Togo|001-949-844-8787>|(855)713-8773>|alex56@walls.org>|12/2/2021|~http://www.beck.com/~
A08A8aF8BE9FaD4>|Kristine|Cox|Carpenter-Cook>|~Jodyberg~|Sri Lanka|786-284-3358x6104>|+1-315-627-1796x47212>|~holdenmiranda@clarke.com~>|2/8/2021|~https://www.brandt.com/~
6fEaA1b7cab7B6C>|Faith|~Lutz~|Carter-Hancock>|~Burchbury~|Singapore|(781)861-7180x8306>|207-185-3665>|~cassieparrish@blevins.com~>|1/26/2022|~http://stevenson.org/~
8cad0b4CBceaeec>|Miranda|Beasley|Singleton and Sons>|~Desireeshire~|Oman|540.085.3135x185>|+1-600-462-6432x21881>|~vduncan@parks-hardy.com~>|4/12/2022|~http://acosta.org/~
a5DC21AE3a21eaA>|Caroline|Foley|Winters-Mendoza>|West ~Adriennemouth~>|Western Sahara>|936.222.4746x9924>|001-469-948-6341x359>|~holtgwendolyn@watson.com~>|3/10/2021|~http://www.benson-roth.com/~
F8Aa9d6DfcBeeF8>|Greg|~Mata~|Valentine ~LLC~ Group>|Lake Leslie|Mozambique|(701)087-2415>|(195)156-1861x26241>|~jaredjuarez@carroll.org~>|3/26/2022|~http://pitts-cherry.com/~
F160f5Db3EfE973>|Clifford|Jacobson|Simon ~LLC~|~Harmonview~|South Georgia>|001-151-330-3524x0469>|(748)477-7174>|joseph26@jacobson.com>|9/24/2020|~https://mcconnell.com/~
0F60FF3DdCd7aXX>|Joanna|Kirk|~Mays-Mccormick~>|~Jamesshire~|French Polynesia>|(266)131-7001x711>|(283)312-5579x11543>|~tuckerangie@salazar.net~>|9/24/2021|~https://www.camacho.net/~
9F9AdB7B8A6f7F2>|Maxwell|Frye|Patterson Inc|East Carly|Malta|423.262.3059x>|202-880-0688x7491>|~fgibson@drake-webb.com~>|1/12/2022|~http://www.roberts.com/~
FBd0Ded4F02a742>|~Kiara~|Houston|Manning, Hester and Arroyo>|South Alvin|Netherlands|001-274-040-3582x10611>|+1-528-175-0973x4684>|~blanchardbob@wallace-shannon.com~>|9/15/2020|~https://www.reid-potts.com/~
2FB0FAA1d429421>|Colleen|Howard|Greer and Sons>|~Brittanyview~|Paraguay|1935085151|(947)115-7711x5488>|~rsingleton@ryan-cherry.com~>|8/19/2020|~http://paul.biz/~
010468dAA11382c>|Janet|Valenzuela|Watts-Donaldson>|~Veronicamouth~>|Lao People's Republic>|354.259.5062x7538>|500.433.2022x>|stefanie71@spence.com>|9/8/2020|~https://moreno.biz/~
eC1927Ca84E033e>|Shane|Wilcox|Tucker ~LLC~|~Bryanville~|Albania|(429)005-9030x11004>|541-116-4501>|mariah88@santos.com>|4/6/2021|~https://www.ramos.com/~
09D7D7C8Fe09aea>|Marcus|Moody|Giles Ltd|~Kaitlyntown~|Panama|674-677-8623>|909-277-5485x566>|~donnamullins@norris-barrett.org~>|5/24/2022|~https://www.curry.com/~`
  .split('\n')
  .map((line, i) => [String(i + 1), ...line.split('|')]);

function CellText({ text }: { text: string }) {
  return (
    <>
      {text.split('~').map((part, i) => (i % 2 ? <Wave key={i}>{part}</Wave> : part))}
    </>
  );
}

function DataCell({ text, col, selected }: { text: string; col: number; selected?: boolean }) {
  const clip = text.endsWith('>');
  const body = clip ? text.slice(0, -1) : text;
  const right = /^[\d/]+$/.test(body);
  return (
    <Cell $right={right} $clip={clip} $spill={col === 11} $selected={selected}>
      <CellText text={body} />
      {selected && <FillHandle />}
    </Cell>
  );
}

function SheetGrid() {
  const rows = [HEADERS, ...DATA];
  return (
    <Sheet>
      <Corner />
      {COLUMNS.map((c, i) => (
        <ColHead key={c} $active={i === 0}>{c}</ColHead>
      ))}
      <ColHead />
      {rows.map((row, r) => (
        <React.Fragment key={r}>
          <RowHead $active={r === 0}>{r + 1}</RowHead>
          {Array.from({ length: 15 }, (_, c) => (
            <DataCell key={c} text={row[c] ?? ''} col={c} selected={r === 0 && c === 0} />
          ))}
        </React.Fragment>
      ))}
    </Sheet>
  );
}

export default function App() {
  return (
    <>
      <GlobalStyle />
      <Page>
        <Window>
          <TitleBar>
            output.xls - LibreOffice Calc
            <WinControls>
              <Glyph $w={10} $h={2}><rect x="0" y="0" width="32" height="32" fill="#222" /></Glyph>
              <Slot $w={12} $ml={19}>
                <Glyph $w={12} $h={13}>
                  <rect x="1" y="7" width="22" height="24" fill="none" stroke="#222" strokeWidth="3" />
                  <Lines d="M8 7V1h23v24h-8" c="#777" w={2} />
                </Glyph>
              </Slot>
              <CloseDot>✕</CloseDot>
            </WinControls>
          </TitleBar>
          <MenuBar>
            <MenuList>
              {MENU.map((m) => (
                <span key={m}>{m}</span>
              ))}
            </MenuList>
            <MenuClose>×</MenuClose>
          </MenuBar>
          <ToolRow tools={topTools} height={54} iconHeight={32} />
          <ToolRow tools={formatTools} height={46} iconHeight={34} />
          <Work>
            <MainColumn>
              <FormulaBar>
                <NameBox $split={37}>
                  <ComboText>A1</ComboText>
                  <ComboArrow>
                    <Caret />
                  </ComboArrow>
                </NameBox>
                <Slot $w={23} $ml={15}><Glyph $w={23} $h={30}>{icons.fx}</Glyph></Slot>
                <Slot $w={19} $ml={10}><Glyph $w={19} $h={28}>{icons.sigma}</Glyph></Slot>
                <Slot $w={10} $ml={10}><Caret /></Slot>
                <Slot $w={18} $ml={13}><Glyph $w={18} $h={14}>{icons.equals}</Glyph></Slot>
                <FormulaInput>Index</FormulaInput>
                <Slot $w={10} $ml={5}><Caret /></Slot>
                <Slot $w={8} $ml={0} />
              </FormulaBar>
              <GridArea>
                <SheetGrid />
                <VScroll>
                  <VButton />
                  <VThumb />
                </VScroll>
              </GridArea>
              <HScroll>
                <HThumb />
                <HButton />
              </HScroll>
              <TabRow>
                <Slot $w={15} $ml={14}><Glyph $w={15} $h={15}>{icons.first}</Glyph></Slot>
                <Slot $w={16} $ml={14}><Glyph $w={16} $h={13}>{icons.prev}</Glyph></Slot>
                <Slot $w={16} $ml={13}><Glyph $w={16} $h={13}>{icons.next}</Glyph></Slot>
                <Slot $w={15} $ml={14}><Glyph $w={15} $h={15}>{icons.last}</Glyph></Slot>
                <Slot $w={12} $ml={21}><Glyph $w={12} $h={14}>{icons.addSheet}</Glyph></Slot>
                <Slot $w={45} $ml={14}><SheetTab $active>1</SheetTab></Slot>
                <SheetTab>2</SheetTab>
              </TabRow>
            </MainColumn>
            <Sidebar>
              <SideColumn>
                <SideIcon $top={14} $left={29}><Glyph $w={14} $h={14}>{icons.menu}</Glyph></SideIcon>
                <SideSelected><Glyph $w={30} $h={30}>{icons.props}</Glyph></SideSelected>
                <SideIcon $top={19} $left={21}><Glyph $w={32} $h={32}>{icons.styles}</Glyph></SideIcon>
                <SideIcon $top={25} $left={20}><Glyph $w={33} $h={30}>{icons.gallery}</Glyph></SideIcon>
                <SideIcon $top={27} $left={21}><Glyph $w={30} $h={30}>{icons.nav}</Glyph></SideIcon>
                <SideIcon $top={26} $left={23}><Glyph $w={28} $h={32}>{icons.fx}</Glyph></SideIcon>
              </SideColumn>
            </Sidebar>
          </Work>
          <StatusBar>
            <StatusCell $w={277} $pad={12} $line>Sheet 1 of 2</StatusCell>
            <StatusCell $w={272} $line />
            <StatusCell $w={357} $pad={11}>PageStyle_1</StatusCell>
            <StatusCell $w={313} $pad={20}>English (USA)</StatusCell>
            <StatusCell $w={48} $pad={7}><Glyph $w={26} $h={15}>{icons.insertMode}</Glyph></StatusCell>
            <StatusCell $w={27} $pad={0}><Glyph $w={14} $h={14}>{icons.docState}</Glyph></StatusCell>
            <StatusCell $w={37} $line />
            <StatusCell $w={318} $center $line>Average: ; Sum: 0</StatusCell>
            <StatusCell $w={209} $pad={6} $line>
              <ZoomSign />
              <ZoomTrack><ZoomThumb /></ZoomTrack>
              <ZoomSign $plus />
            </StatusCell>
            <StatusCell $w={63} $pad={9}>100%</StatusCell>
          </StatusBar>
          <CollapseHandle />
          <TitleMark />
          <TabCircle />
          <ArrowMark viewBox="0 0 64 50">
            <path d="M2 23 L33 2 L33 16 L62 14 L62 37 L33 36 L33 48 Z" fill="#f40000" stroke="#111" strokeWidth="2.5" strokeLinejoin="miter" />
          </ArrowMark>
        </Window>
      </Page>
    </>
  );
}
